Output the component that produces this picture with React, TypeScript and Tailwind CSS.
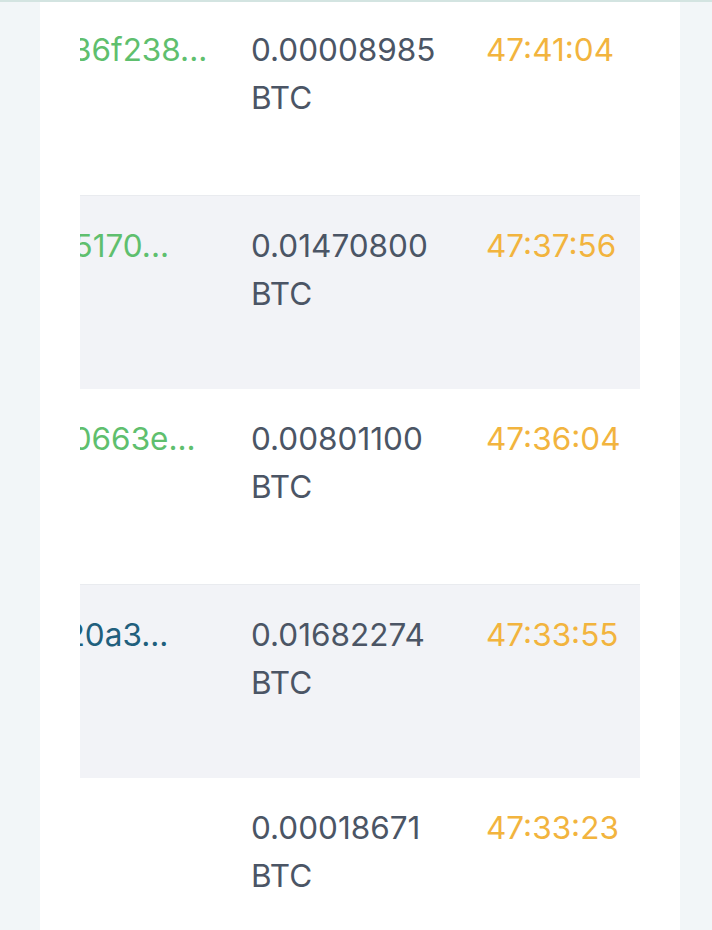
const rows = [
  { hash: "c36f238...", amount: "0.00008985", time: "47:41:04", hashColor: "text-[#5fbf6e]", shaded: false },
  { hash: "85170...", amount: "0.01470800", time: "47:37:56", hashColor: "text-[#5fbf6e]", shaded: true },
  { hash: "a0663e...", amount: "0.00801100", time: "47:36:04", hashColor: "text-[#5fbf6e]", shaded: false },
  { hash: "f20a3...", amount: "0.01682274", time: "47:33:55", hashColor: "text-[#215f7d]", shaded: true },
  { hash: "", amount: "0.00018671", time: "47:33:23", hashColor: "text-[#5fbf6e]", shaded: false },
];

export default function App() {
  return (
    <div className="h-[930px] w-[712px] overflow-hidden border-t-2 border-[#d3e4e1] bg-[#f2f6f8] font-['Inter',sans-serif]">
      <div className="ml-10 mr-8 h-full bg-white px-10">
        <div className="overflow-hidden">
          <div className="ml-[-26px] flex flex-col">
            {rows.map((r, i) => (
              <div
                key={i}
                className={`grid h-[194.5px] grid-cols-[197px_235px_1fr] pt-[26px] text-[31.5px] leading-[48px] first:h-[192.5px] first:pt-[24px] ${
                  r.shaded ? "border-t border-[#e9ebef] bg-[#f2f3f7]" : "bg-white"
                }`}
              >
                <div className={`whitespace-nowrap ${r.hashColor}`}>{r.hash}</div>
                <div className="w-[190px] text-[#4b5565]">
                  {r.amount} BTC
                </div>
                <div className="text-[#f2b43e]">{r.time}</div>
              </div>
            ))}
          </div>
        </div>
      </div>
    </div>
  );
}
